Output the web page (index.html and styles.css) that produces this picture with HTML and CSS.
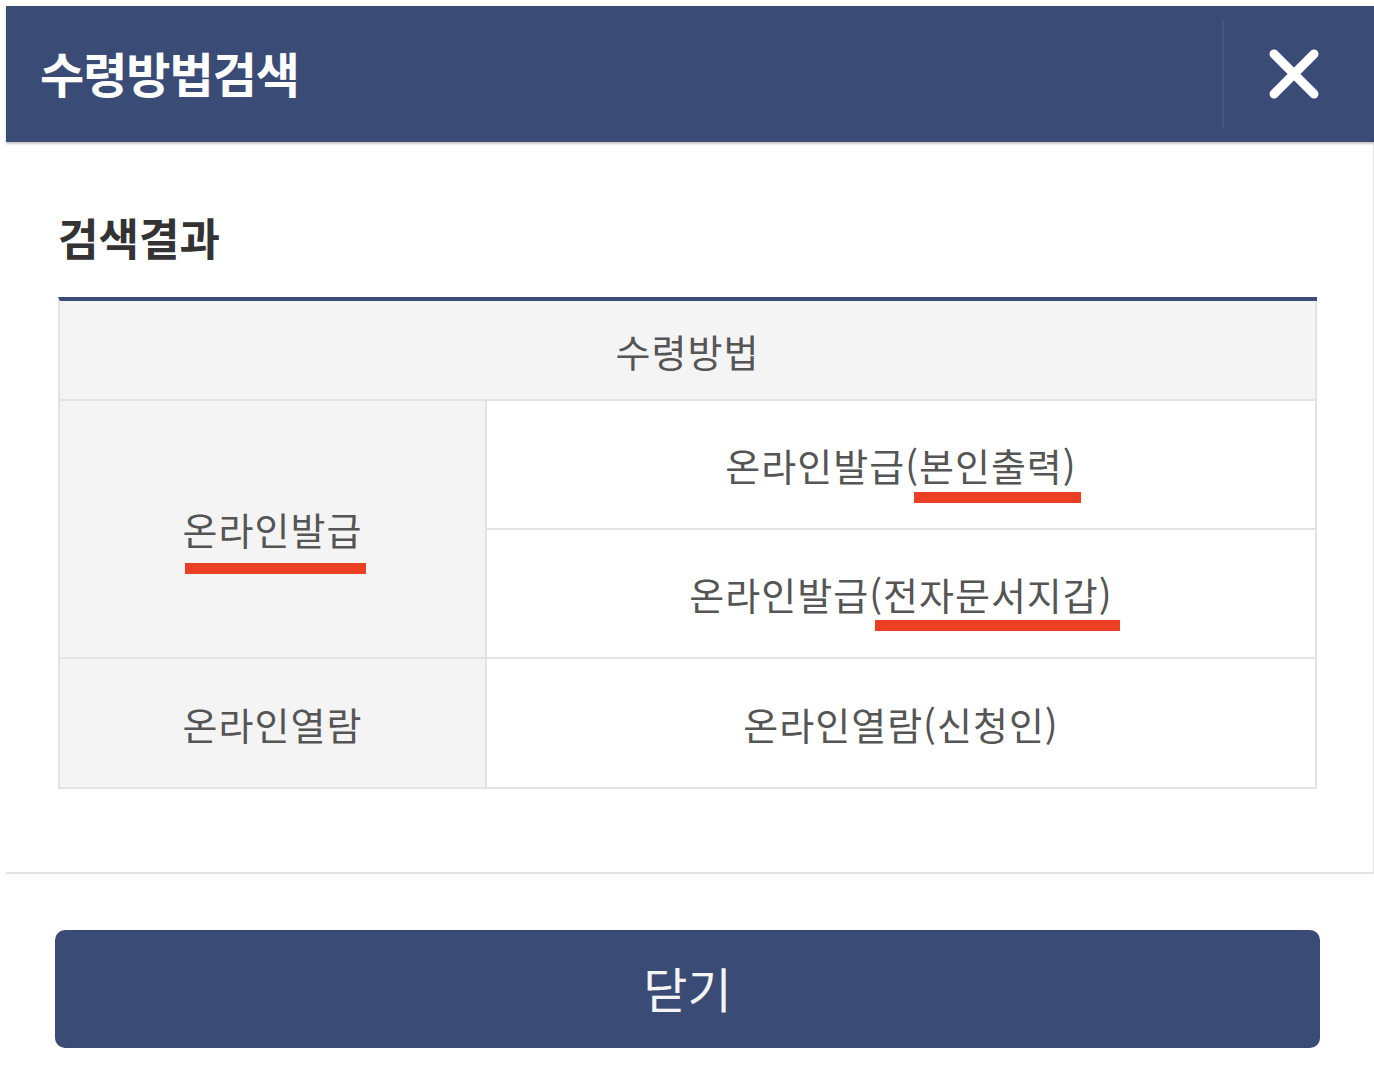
FILE: index.html
```html
<!DOCTYPE html>
<html lang="ko">
<head>
<meta charset="utf-8">
<title>수령방법검색</title>
<link rel="stylesheet" href="styles.css">
</head>
<body>
<div class="popup">
  <header class="pop-head">
    <h1 class="pop-title">수령방법검색</h1>
    <button class="pop-close" type="button" aria-label="닫기">
      <svg width="50" height="50" viewBox="0 0 50 50" aria-hidden="true">
        <path d="M5 5 L45 45 M45 5 L5 45" stroke="#ffffff" stroke-width="9" stroke-linecap="round" fill="none"/>
      </svg>
    </button>
  </header>
  <section class="pop-body">
    <h2 class="sec-title">검색결과</h2>
    <div class="result">
      <div class="cell cell-head">수령방법</div>
      <div class="cell cell-side cell-span"><span class="mark mark-side">온라인발급</span></div>
      <div class="cell cell-main">온라인발급<span class="mark mark-a">(본인출력)</span></div>
      <div class="cell cell-main">온라인발급<span class="mark mark-b">(전자문서지갑)</span></div>
      <div class="cell cell-side cell-last">온라인열람</div>
      <div class="cell cell-main cell-last">온라인열람(신청인)</div>
    </div>
  </section>
  <div class="pop-foot">
    <button class="btn-close" type="button">닫기</button>
  </div>
</div>
</body>
</html>
```

FILE: styles.css
```css
* { box-sizing: border-box; }

html, body {
  margin: 0;
  padding: 0;
  background: #ffffff;
}

body {
  font-family: "Noto Sans CJK KR", "Noto Sans", sans-serif;
  color: #555555;
}

.popup {
  width: 1368px;
  margin: 6px 0 0 6px;
}

.pop-head {
  height: 136px;
  background: #3a4c75;
  display: flex;
  align-items: center;
  justify-content: space-between;
  box-shadow: 0 2px 2px rgba(0, 0, 0, 0.22);
  position: relative;
  z-index: 1;
}

.pop-title {
  margin: -4px 0 0 34px;
  font-size: 48px;
  font-weight: 700;
  letter-spacing: -1px;
  color: #ffffff;
  line-height: 1;
}

.pop-close {
  align-self: stretch;
  margin: 14px 0;
  width: 152px;
  padding: 0 10px 0 0;
  border: 0;
  border-left: 2px solid #44577f;
  background: transparent;
  display: flex;
  align-items: center;
  justify-content: center;
  cursor: pointer;
}

.pop-body {
  border-right: 1px solid #e6e6e6;
  border-bottom: 2px solid #e2e2e2;
  padding: 71px 56px 83px 52px;
}

.sec-title {
  margin: 0 0 36px;
  font-size: 44px;
  line-height: 48px;
  font-weight: 700;
  letter-spacing: 0;
  color: #333333;
}

.result {
  display: grid;
  grid-template-columns: 427px 1fr;
  width: 1259px;
  border-top: 4px solid #3a4c75;
  border-left: 2px solid #e3e3e3;
}

.cell {
  display: flex;
  align-items: center;
  justify-content: center;
  height: 129px;
  border-right: 2px solid #e3e3e3;
  border-bottom: 2px solid #e3e3e3;
  font-size: 38px;
  letter-spacing: 1px;
  color: #555555;
  background: #ffffff;
}

.cell-head {
  grid-column: 1 / span 2;
  height: 100px;
  background: #f4f4f4;
}

.cell-side {
  background: #f4f4f4;
}

.cell-span {
  grid-row: span 2;
  height: auto;
}

.cell-last {
  height: 130px;
}

.mark {
  position: relative;
  display: inline-block;
  line-height: 48px;
}

.mark::after {
  content: "";
  position: absolute;
  left: 0;
  right: 0;
  height: 11px;
  background: #ea3f23;
}

.mark-side::after {
  top: 58px;
  left: 2px;
  right: -4px;
}

.mark-a::after {
  top: 51px;
  left: 9px;
  right: -4px;
}

.mark-b::after {
  top: 50px;
  left: 6px;
  right: -7px;
}

.pop-foot {
  padding: 56px 0 0 49px;
}

.btn-close {
  width: 1265px;
  height: 118px;
  border: 0;
  border-radius: 10px;
  background: #3a4c75;
  color: #f4f4f4;
  font-family: "Noto Sans CJK KR", "Noto Sans", sans-serif;
  font-size: 48px;
  cursor: pointer;
  padding: 0 0 4px;
}
```
